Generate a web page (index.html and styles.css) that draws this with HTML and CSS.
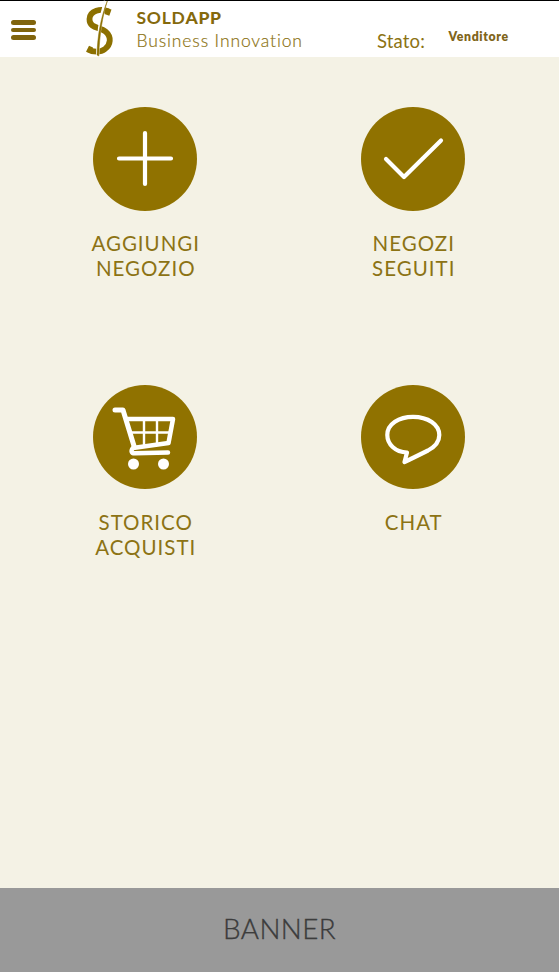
FILE: index.html
```html
<!DOCTYPE html>
<html lang="it">
<head>
<meta charset="utf-8">
<title>SoldApp</title>
<link rel="stylesheet" href="styles.css">
</head>
<body>
<header class="topbar">
  <button class="menu" aria-label="Menu"><span></span><span></span><span></span></button>
  <svg class="logo" width="34" height="57" viewBox="0 0 34 57" aria-hidden="true">
    <path d="M24.5 11.5C17 8 5.8 10.5 5.5 19C5.3 28.5 16 27 21.5 31.5C28 37 26.5 45 21 49C16.5 52.5 9 52.5 4 49.5" fill="none" stroke="#8c7000" stroke-width="5.8"/>
    <path d="M22 8L27.5 9.5L25.3 15.8L20.5 14ZM5 45.7L2 51.7L8 53L9 47.5Z" fill="#8c7000"/>
    <path d="M21.5 1C17 16 14 34 13.6 55.5" fill="none" stroke="#fff" stroke-width="3.4"/>
    <path d="M23.3 1C18.5 16 15.5 34 14.8 56L13 55C13.5 35 17 17 23.3 1Z" fill="#8c7000" stroke="#8c7000" stroke-width=".5"/>
  </svg>
  <div class="brand">
    <div class="name">SOLD<b>APP</b></div>
    <div class="tagline">Business Innovation</div>
  </div>
  <div class="state">Stato:</div>
  <div class="role">Venditore</div>
</header>
<main class="grid">
  <a class="tile">
    <svg width="104" height="104" viewBox="0 0 104 104"><circle cx="52" cy="52" r="52"/><path d="M52 26V77M26 51.5H78" class="line"/></svg>
    <span class="label">AGGIUNGI</span><span class="label">NEGOZIO</span>
  </a>
  <a class="tile">
    <svg width="104" height="104" viewBox="0 0 104 104"><circle cx="52" cy="52" r="52"/><path d="M25 52L43 70L80 33.5" class="line"/></svg>
    <span class="label">NEGOZI</span><span class="label">SEGUITI</span>
  </a>
  <a class="tile">
    <svg width="104" height="104" viewBox="0 0 104 104"><circle cx="52" cy="52" r="52"/>
      <path d="M22 25H30L41 61" class="line cart"/>
      <path d="M34 34H80L75.5 58L40 63C37.5 66 38.5 68.5 42 68.3L75 67.5" class="line basket"/>
      <path d="M38 47.5H77M51 34V60M64 34V59" class="line thin"/>
      <circle cx="40.5" cy="79" r="5.5" class="wheel"/><circle cx="70.5" cy="79" r="5.5" class="wheel"/>
    </svg>
    <span class="label">STORICO</span><span class="label">ACQUISTI</span>
  </a>
  <a class="tile">
    <svg width="104" height="104" viewBox="0 0 104 104"><circle cx="52" cy="52" r="52"/><path d="M46 67.5C34 67 26.3 59 26.3 50C26.3 39 38 31.8 52 31.8C67 31.8 78.3 39.5 78.3 50C78.3 57 74.5 61.5 67 65.5C59 69.5 52 73 43.5 77Z" class="line"/></svg>
    <span class="label">CHAT</span>
  </a>
</main>
<footer class="banner"><span>BANNER</span></footer>
</body>
</html>
```
FILE: styles.css
```css
* { box-sizing: border-box; }
body {
  margin: 0;
  height: 972px;
  display: flex;
  flex-direction: column;
  background: #f4f2e5;
  color: #8c7314;
  font-family: Lato, "Liberation Sans", sans-serif;
  overflow: hidden;
}
.topbar {
  height: 57px;
  flex: none;
  display: flex;
  align-items: flex-start;
  background: #fff;
  border-top: 1px solid #000;
  white-space: nowrap;
}
.menu {
  width: 25px;
  margin: 19px 0 0 11px;
  padding: 0;
  border: 0;
  background: none;
  display: grid;
  gap: 3px;
}
.menu span { height: 4.7px; border-radius: 3px; background: #80640c; }
.logo { margin: -1px 0 0 48px; flex: none; }
.brand { width: 200px; margin: 6px 0 0 18.5px; }
.name { font-size: 17.5px; line-height: 22px; font-weight: 700; letter-spacing: .7px; color: #85690c; }
.name b { font-weight: 900; }
.tagline { font-size: 17.5px; line-height: 23px; font-weight: 300; letter-spacing: .88px; -webkit-text-stroke: .2px; }
.state { width: 71.5px; margin: 28px 0 0 40.5px; font-size: 18.5px; line-height: 24px; letter-spacing: .15px; }
.role { margin: 28px 0 0; font-size: 12.3px; line-height: 16px; font-weight: 800; letter-spacing: .6px; color: #80651a; }
.grid {
  flex: 1;
  display: grid;
  grid-template-columns: 268px 268px;
  grid-template-rows: 278.5px 278.5px;
  padding: 49.5px 0 0 11px;
}
.tile { display: flex; flex-direction: column; align-items: center; }
.tile svg { display: block; margin-bottom: 20.5px; fill: #907200; flex: none; }
.tile .line { fill: none; stroke: #fff; stroke-width: 4.2; stroke-linecap: round; stroke-linejoin: round; }
.tile .cart { stroke-width: 5; }
.tile .basket { stroke-width: 4.5; }
.tile .thin { stroke-width: 2.4; }
.tile .wheel { fill: #fff; }
.label { padding-left: 1.5px; font-size: 20.5px; line-height: 25px; letter-spacing: 1px; }
.banner {
  height: 84px;
  flex: none;
  display: flex;
  justify-content: center;
  align-items: center;
  padding-bottom: 3px;
  background: #999;
  color: #3c3c3c;
  font-size: 27.8px;
  font-weight: 300;
  letter-spacing: .4px;
  -webkit-text-stroke: .35px;
}
```
